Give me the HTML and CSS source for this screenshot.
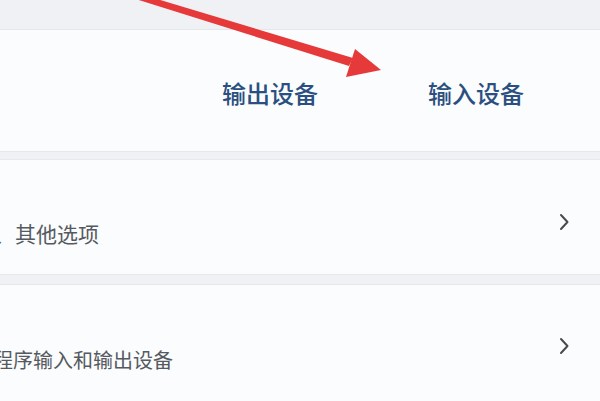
FILE: index.html
```html
<!DOCTYPE html>
<html lang="zh-CN">
<head>
<meta charset="utf-8">
<title>声音</title>
<link rel="stylesheet" href="styles.css">
</head>
<body>
<div class="page">
  <div class="top-band"></div>
  <section class="card card-tabs">
    <div class="tabs">
      <span class="tab">输出设备</span>
      <span class="tab">输入设备</span>
    </div>
  </section>
  <section class="card card-row card-devices">
    <div class="row-text"><span class="desc desc-devices">故障、其他选项</span></div>
    <svg class="chevron" width="12" height="18" viewBox="0 0 12 18"><path d="M3 2 L9.5 9 L3 16" fill="none" stroke="#474a4e" stroke-width="2" stroke-linecap="round" stroke-linejoin="round"/></svg>
  </section>
  <section class="card card-row card-mixer">
    <div class="row-text"><span class="desc desc-mixer">应用程序输入和输出设备</span></div>
    <svg class="chevron" width="12" height="18" viewBox="0 0 12 18"><path d="M3 2 L9.5 9 L3 16" fill="none" stroke="#474a4e" stroke-width="2" stroke-linecap="round" stroke-linejoin="round"/></svg>
  </section>
  <svg class="arrow" width="600" height="100" viewBox="0 0 600 100">
    <polygon points="126,-4 147,-4 353,58 349,66" fill="#e63a3a"/>
    <polygon points="355,49 346,77 381,70" fill="#e63a3a"/>
  </svg>
</div>
</body>
</html>
```
FILE: styles.css
```css
html, body {
  margin: 0;
  padding: 0;
}
body {
  background: #eff1f5;
  font-family: "Noto Sans CJK SC", "Noto Sans", sans-serif;
  overflow: hidden;
}
.page {
  position: relative;
  width: 600px;
  height: 401px;
  overflow: hidden;
}
.top-band {
  height: 29px;
  border-bottom: 1px solid #e4e6ea;
}
.card {
  background: #fbfcfd;
  border-bottom: 1px solid #e6e8ec;
}
.card-tabs {
  height: 121px;
  display: flex;
  align-items: center;
}
.tabs {
  display: flex;
  gap: 110px;
  padding-left: 222px;
  padding-top: 4px;
}
.tab {
  font-size: 24px;
  font-weight: 500;
  color: #2a4f80;
  line-height: 32px;
}
.card-row {
  display: flex;
  align-items: center;
  justify-content: space-between;
  border-top: 1px solid #e6e8ec;
  padding-right: 30px;
}
.card-devices {
  margin-top: 7px;
  height: 114px;
}
.card-mixer {
  margin-top: 9px;
  height: 120px;
}
.row-text {
  overflow: hidden;
  white-space: nowrap;
}
.desc {
  display: block;
  color: #555a60;
  line-height: 28px;
}
.desc-devices {
  font-size: 21px;
  margin-left: -48px;
  margin-top: 32px;
}
.desc-mixer {
  font-size: 20px;
  margin-left: -47px;
  margin-top: 30px;
}
.card-devices .chevron {
  margin-top: 10px;
}
.card-mixer .chevron {
  margin-top: 2px;
}
.arrow {
  position: absolute;
  left: 0;
  top: 0;
}
```
